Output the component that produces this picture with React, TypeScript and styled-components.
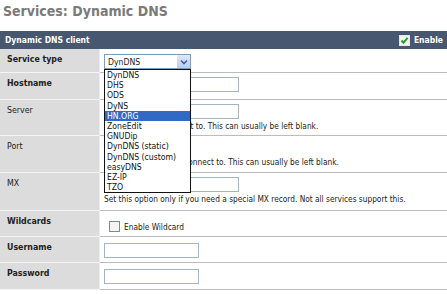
import React from "react";
import styled, { createGlobalStyle } from "styled-components";

const GlobalStyle = createGlobalStyle`
  body {
    margin: 0;
    background: #ffffff;
    font-family: "DejaVu Sans Condensed", "DejaVu Sans", sans-serif;
    font-stretch: condensed;
  }
`;

const Page = styled.div`
  width: 447px;
  height: 294px;
  overflow: hidden;
`;

const Title = styled.h1`
  margin: 0;
  height: 31px;
  padding: 3px 0 0 3px;
  box-sizing: border-box;
  font-size: 14px;
  font-weight: bold;
  color: #7a7a7a;
`;

const TopicBar = styled.div`
  height: 18px;
  display: flex;
  align-items: center;
  justify-content: space-between;
  padding: 0 4px 0 5px;
  background: #475770;
  color: #ffffff;
  font-size: 8.5px;
  font-weight: bold;
`;

const EnableToggle = styled.label`
  display: flex;
  align-items: center;
  gap: 4px;
`;

const Row = styled.div<{ $h: number }>`
  display: grid;
  grid-template-columns: 100px 1fr;
  height: ${(p) => p.$h}px;
`;

const LabelCell = styled.div<{ $req?: boolean }>`
  background: #dcdcdc;
  border-bottom: 1px solid #f4f4f4;
  border-right: 1px solid #ececec;
  padding: 5px 0 0 7px;
  font-size: 8.75px;
  font-weight: ${(p) => (p.$req ? "bold" : "normal")};
  color: #222222;
`;

const ValueCell = styled.div`
  position: relative;
  border-bottom: 1px solid #bcbcbc;
  padding: 4px 0 0 4px;
  font-size: 8.25px;
  color: #222222;
`;

const TextInput = styled.div<{ $w: number; $top?: number }>`
  width: ${(p) => p.$w}px;
  height: 15px;
  margin-top: ${(p) => p.$top ?? 0}px;
  box-sizing: border-box;
  border: 1px solid #a5b3c4;
  background: #ffffff;
`;

const Hint = styled.div`
  margin-top: 2px;
  line-height: 11px;
  white-space: nowrap;
`;

const SelectBox = styled.div`
  position: relative;
  width: 87px;
  height: 15px;
  margin-top: 1px;
  box-sizing: border-box;
  border: 1px solid #7f9db9;
  display: flex;
  align-items: center;
  padding-left: 3px;
  background: #ffffff;
  font-size: 8.6px;
`;

const ArrowButton = styled.div`
  position: absolute;
  right: 0;
  top: 0;
  width: 13px;
  height: 13px;
  background: linear-gradient(#dde7fb, #b9cdf5);
  display: flex;
  align-items: center;
  justify-content: center;
`;

const OptionList = styled.ul`
  position: absolute;
  left: -1px;
  top: 14px;
  width: 87px;
  margin: 0;
  padding: 0;
  list-style: none;
  box-sizing: border-box;
  border: 1px solid #111111;
  background: #ffffff;
  z-index: 5;
`;

const OptionItem = styled.li<{ $active?: boolean }>`
  height: 10.2px;
  line-height: 10.2px;
  padding-left: 2px;
  font-size: 8.6px;
  background: ${(p) => (p.$active ? "#316ac5" : "transparent")};
  color: ${(p) => (p.$active ? "#ffffff" : "#111111")};
`;

const CheckLine = styled.div`
  display: flex;
  align-items: center;
  gap: 4px;
  padding: 6px 0 0 5px;
`;

const services = [
  "DynDNS",
  "DHS",
  "ODS",
  "DyNS",
  "HN.ORG",
  "ZoneEdit",
  "GNUDip",
  "DynDNS (static)",
  "DynDNS (custom)",
  "easyDNS",
  "EZ-IP",
  "TZO",
];

function CheckIcon({ checked }: { checked: boolean }) {
  return (
    <svg width="11" height="11" viewBox="0 0 11 11">
      <rect x="0.5" y="0.5" width="10" height="10" fill="#f4f4f0" stroke={checked ? "#dfe6ee" : "#7d8a99"} />
      {checked && <path d="M2.5 5.5 L4.5 7.8 L8.6 2.8" fill="none" stroke="#21a121" strokeWidth="2" />}
    </svg>
  );
}

export default function App() {
  return (
    <Page>
      <GlobalStyle />
      <Title>Services: Dynamic DNS</Title>
      <TopicBar>
        <span>Dynamic DNS client</span>
        <EnableToggle>
          <CheckIcon checked />
          Enable
        </EnableToggle>
      </TopicBar>

      <Row $h={24}>
        <LabelCell $req>Service type</LabelCell>
        <ValueCell>
          <SelectBox>
            DynDNS
            <ArrowButton>
              <svg width="8" height="6" viewBox="0 0 8 6">
                <path d="M1 1.5 L4 4.5 L7 1.5" fill="none" stroke="#4d6185" strokeWidth="1.6" />
              </svg>
            </ArrowButton>
            <OptionList>
              {services.map((s) => (
                <OptionItem key={s} $active={s === "HN.ORG"}>
                  {s}
                </OptionItem>
              ))}
            </OptionList>
          </SelectBox>
        </ValueCell>
      </Row>

      <Row $h={27}>
        <LabelCell $req>Hostname</LabelCell>
        <ValueCell>
          <TextInput $w={135} />
        </ValueCell>
      </Row>

      <Row $h={36}>
        <LabelCell>Server</LabelCell>
        <ValueCell>
          <TextInput $w={135} />
          <Hint>Enter a host, to connect to. This can usually be left blank.</Hint>
        </ValueCell>
      </Row>

      <Row $h={37}>
        <LabelCell>Port</LabelCell>
        <ValueCell>
          <TextInput $w={50} />
          <Hint>Enter the TCP port to connect to. This can usually be left blank.</Hint>
        </ValueCell>
      </Row>

      <Row $h={38}>
        <LabelCell>MX</LabelCell>
        <ValueCell>
          <TextInput $w={135} />
          <Hint>Set this option only if you need a special MX record. Not all services support this.</Hint>
        </ValueCell>
      </Row>

      <Row $h={26}>
        <LabelCell $req>Wildcards</LabelCell>
        <ValueCell>
          <CheckLine>
            <CheckIcon checked={false} />
            Enable Wildcard
          </CheckLine>
        </ValueCell>
      </Row>

      <Row $h={26}>
        <LabelCell $req>Username</LabelCell>
        <ValueCell>
          <TextInput $w={95} $top={2} />
        </ValueCell>
      </Row>

      <Row $h={27}>
        <LabelCell $req>Password</LabelCell>
        <ValueCell>
          <TextInput $w={95} $top={2} />
        </ValueCell>
      </Row>
    </Page>
  );
}
